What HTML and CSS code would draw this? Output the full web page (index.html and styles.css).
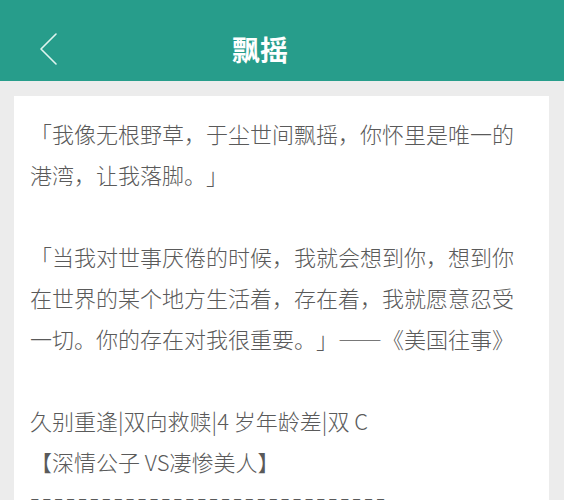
FILE: index.html
```html
<!DOCTYPE html>
<html lang="zh-CN">
<head>
<meta charset="utf-8">
<title>飘摇</title>
<link rel="stylesheet" href="styles.css">
</head>
<body>
<header class="topbar">
  <div class="back">
    <svg width="20" height="32" viewBox="0 0 20 32" aria-hidden="true">
      <polyline points="17,1 2,16 17,31" fill="none" stroke="#dff4ef" stroke-width="1.6" stroke-linecap="round" stroke-linejoin="round"/>
    </svg>
  </div>
  <h1 class="title">飘摇</h1>
</header>
<main class="page">
  <article class="card">
    <p class="para">「我像无根野草，于尘世间飘摇，你怀里是唯一的港湾，让我落脚。」</p>
    <p class="para">「当我对世事厌倦的时候，我就会想到你，想到你在世界的某个地方生活着，存在着，我就愿意忍受一切。你的存在对我很重要。」——《美国往事》</p>
    <div class="line">久别重逢|双向救赎|4 岁年龄差|双 C</div>
    <div class="line">【深情公子 VS凄惨美人】</div>
    <div class="line dashes">------------------------------</div>
  </article>
</main>
</body>
</html>
```
FILE: styles.css
```css
html, body {
  margin: 0;
  padding: 0;
}
body {
  background: #ececec;
  font-family: "Noto Sans CJK SC", "Noto Sans", sans-serif;
  width: 564px;
  height: 500px;
  overflow: hidden;
}
.topbar {
  height: 81px;
  box-sizing: border-box;
  padding-top: 17px;
  background: #279d8b;
  display: flex;
  align-items: center;
}
.back {
  width: 60px;
  box-sizing: border-box;
  padding-left: 39px;
  display: flex;
  align-items: center;
}
.title {
  flex: 1;
  margin: 0 104px 0 0;
  text-align: center;
  color: #ffffff;
  font-size: 28px;
  font-weight: 700;
  line-height: 1;
}
.page {
  padding: 15px 15px 0 14px;
}
.card {
  background: #ffffff;
  padding: 17px 16px 20px 16px;
  color: #5a5a5a;
  font-size: 22px;
  font-weight: 300;
  line-height: 41px;
  min-height: 420px;
  text-spacing-trim: space-all;
}
.para {
  margin: 0 0 41px 0;
}
.line {
  white-space: nowrap;
}
.dashes {
  color: #333;
  font-size: 26px;
  font-weight: 700;
  letter-spacing: 2.3px;
  line-height: 30px;
}
```
